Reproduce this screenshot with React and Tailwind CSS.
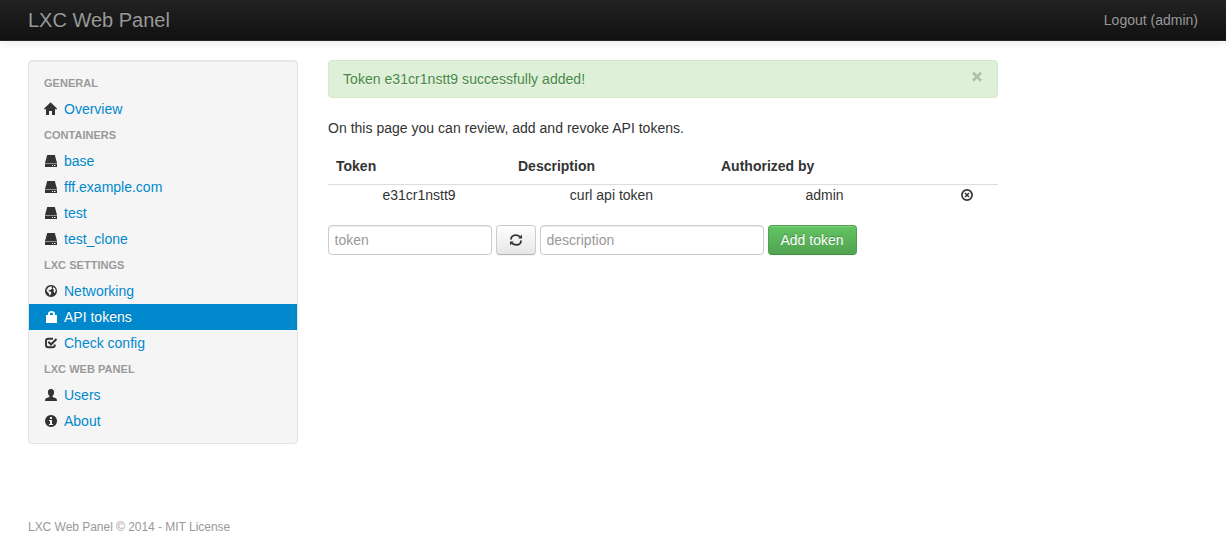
import React from "react";

function Icon({ name, className = "" }) {
  return (
    <svg viewBox="0 0 14 14" fill="currentColor" className={`block size-3.5 shrink-0 ${className}`} aria-hidden="true">
      {icons[name]}
    </svg>
  );
}

const icons = {
  home: <path d="M6.6 0.2 L13 6.6 V7.3 H11 V13 H8 V9 H5 V13 H2 V7.3 H0.2 V6.6 Z" />,
  drive: (
    <>
      <path d="M3.2 1 H10.8 L13 9 H1 Z" />
      <path fillRule="evenodd" d="M1 9.4 H13 V13 H1 Z M8 11 V12 H9 V11 Z M10 11 V12 H11.5 V11 Z" />
    </>
  ),
  globe: (
    <path
      fillRule="evenodd"
      d="M7 1 a6 6 0 1 0 0.01 0 Z M4.3 3.4 L6 2.5 L8.2 2.6 L7.6 3.6 L8.2 4.4 L6.4 6 L4.6 6.2 L4.9 7.2 L6.9 7.8 L7.3 9.3 L6.2 11.3 L5.4 11.2 L4.9 9.4 L3 7.6 L2.5 6 Z M9.2 3 L11.2 4.6 L11.8 7 L10.8 8.9 L9.4 7.7 L10 6.2 L9 5 Z"
    />
  ),
  lock: <path d="M4 5 V3.6 C4 0.2 11 0.2 11 3.6 V5 H13 V13 H2 V5 Z M6 5 H9 V3.8 C9 2.3 6 2.3 6 3.8 Z" fillRule="evenodd" />,
  check: (
    <>
      <path d="M9 2.7 H4.4 Q2 2.7 2 5 V8.9 Q2 11.2 4.4 11.2 H8.3 Q10.8 11.2 10.8 8.9 V8.4" fill="none" stroke="currentColor" strokeWidth="1.9" />
      <path d="M4.4 5.8 L7 8.4 L12.5 2.9" fill="none" stroke="currentColor" strokeWidth="2.1" />
    </>
  ),
  user: <path d="M7 1 C9.3 1 10.2 2.3 10.1 4.2 C10 5.9 9.4 7.1 8.6 7.9 V9 L12 10.3 Q13 10.7 13 13 H1 Q1 10.7 2 10.3 L5.4 9 V7.9 C4.6 7.1 4 5.9 3.9 4.2 C3.8 2.3 4.7 1 7 1 Z" />,
  info: <path fillRule="evenodd" d="M7 1 a6 6 0 1 0 0.01 0 Z M6 3 H8 V5 H6 Z M5 6 H8 V10 H9 V11 H5 V10 H6 V7 H5 Z" />,
  remove: (
    <>
      <circle cx="7" cy="7" r="5.1" fill="none" stroke="currentColor" strokeWidth="1.7" />
      <path d="M5 5 L9 9 M9 5 L5 9" stroke="currentColor" strokeWidth="1.5" />
    </>
  ),
  refresh: (
    <>
      <path d="M2 6.5 C2 4.2 3.6 2.1 6.6 2.1 C8.4 2.1 9.8 2.6 11 3.8 M12 7.5 C12 9.8 10.4 11.9 7.4 11.9 C5.6 11.9 4.2 11.4 3 10.2" fill="none" stroke="currentColor" strokeWidth="1.8" />
      <path d="M13 1.6 V5.4 H9.2 Z M1 12.4 V8.6 H4.8 Z" />
    </>
  ),
};

const sections = [
  { title: "General", items: [["home", "Overview"]] },
  {
    title: "Containers",
    items: [["drive", "base"], ["drive", "fff.example.com"], ["drive", "test"], ["drive", "test_clone"]],
  },
  {
    title: "LXC settings",
    items: [["globe", "Networking"], ["lock", "API tokens", true], ["check", "Check config"]],
  },
  { title: "LXC Web Panel", items: [["user", "Users"], ["info", "About"]] },
];

function Navbar() {
  return (
    <header className="flex h-[41px] items-start justify-between border-b border-[#252525] bg-linear-to-b from-[#222] to-[#111] px-7 pt-2.5 text-[#999] shadow-[0_1px_10px_rgba(0,0,0,0.1)] [text-shadow:0_-1px_0_rgba(0,0,0,0.25)]">
      <a href="#" className="text-[20px] leading-5">LXC Web Panel</a>
      <a href="#" className="leading-5">Logout (admin)</a>
    </header>
  );
}

function Sidebar() {
  return (
    <nav className="w-[270px] shrink-0 rounded-[4px] border border-[#e3e3e3] bg-[#f5f5f5] py-[9px] shadow-[inset_0_1px_1px_rgba(0,0,0,0.05)]">
      {sections.map((section) => (
        <div key={section.title}>
          <h2 className="px-[15px] py-[3px] text-[11px] leading-5 font-bold tracking-[0.03px] text-[#999] uppercase [text-shadow:0_1px_0_rgba(255,255,255,0.5)]">
            {section.title}
          </h2>
          {section.items.map(([icon, label, active]) => (
            <a
              key={label}
              href="#"
              className={`flex gap-1.5 px-[15px] py-[3px] ${
                active
                  ? "bg-[#0088cc] text-white [text-shadow:0_-1px_0_rgba(0,0,0,0.2)]"
                  : "text-[#0088cc] [text-shadow:0_1px_0_rgba(255,255,255,0.5)]"
              }`}
            >
              <Icon name={icon} className={active ? "mt-[3px] text-white" : "mt-[3px] text-[#333]"} />
              {label}
            </a>
          ))}
        </div>
      ))}
    </nav>
  );
}

const inputClass =
  "h-[30px] rounded-[4px] border border-[#ccc] bg-white px-[5.5px] text-[#555] shadow-[inset_0_1px_1px_rgba(0,0,0,0.075)] outline-none placeholder:text-[#999]";

export default function App() {
  return (
    <div className="min-h-[557px] bg-white font-['Liberation_Sans',Arial,sans-serif] text-[14px] leading-5 text-[#333]">
      <Navbar />
      <div className="flex items-start gap-[30px] px-7 pt-[19px]">
        <Sidebar />
        <main className="w-[670px]">
          <div className="flex h-[38px] justify-between rounded-[4px] border border-[#d6e9c6] bg-[#dff0d8] pt-2 pr-3.5 pl-3.5 text-[#468847] [text-shadow:0_1px_0_rgba(255,255,255,0.5)]">
            <span className="tracking-[0.045px]">Token e31cr1nstt9 successfully added!</span>
            <button className="mt-[2px] flex h-3 w-3 items-center justify-center text-black opacity-20" aria-label="Close">
              <svg viewBox="0 0 12 12" className="size-3" aria-hidden="true">
                <path d="M2 1.8 L10 9.8 M10 1.8 L2 9.8" stroke="currentColor" strokeWidth="2.7" />
              </svg>
            </button>
          </div>
          <p className="mt-5 mb-2.5 tracking-[0.02px]">On this page you can review, add and revoke API tokens.</p>
          <table className="mb-5 w-full table-fixed border-collapse">
            <colgroup>
              <col className="w-[182px]" />
              <col className="w-[203px]" />
              <col className="w-[223px]" />
              <col className="w-[62px]" />
            </colgroup>
            <thead>
              <tr className="text-left">
                <th className="p-2">Token</th>
                <th className="p-2">Description</th>
                <th className="p-2">Authorized by</th>
                <th className="p-2" />
              </tr>
            </thead>
            <tbody>
              <tr className="border-t border-[#ddd] text-center">
                <td className="p-0">e31cr1nstt9</td>
                <td className="p-0">curl api token</td>
                <td className="p-0">admin</td>
                <td className="p-0">
                  <a href="#" className="flex justify-center">
                    <Icon name="remove" />
                  </a>
                </td>
              </tr>
            </tbody>
          </table>
          <form className="flex gap-1">
            <input className={`${inputClass} w-[164px]`} placeholder="token" />
            <button
              type="button"
              className="flex h-[30px] w-10 items-center justify-center rounded-[4px] border border-[#ccc] border-b-[#b3b3b3] bg-linear-to-b from-white to-[#e6e6e6] shadow-[inset_0_1px_0_rgba(255,255,255,0.2),0_1px_2px_rgba(0,0,0,0.05)]"
            >
              <Icon name="refresh" />
            </button>
            <input className={`${inputClass} w-56`} placeholder="description" />
            <button
              type="button"
              className="h-[30px] w-[89px] rounded-[4px] border border-[#4fa14f] border-b-[#459145] bg-linear-to-b from-[#62c462] to-[#51a351] pr-px text-white shadow-[inset_0_1px_0_rgba(255,255,255,0.2),0_1px_2px_rgba(0,0,0,0.05)] [text-shadow:0_-1px_0_rgba(0,0,0,0.25)]"
            >
              Add token
            </button>
          </form>
        </main>
      </div>
      <footer className="px-7 pt-[73px] text-[12px] tracking-[-0.03px] text-[#999]">LXC Web Panel © 2014 - MIT License</footer>
    </div>
  );
}
